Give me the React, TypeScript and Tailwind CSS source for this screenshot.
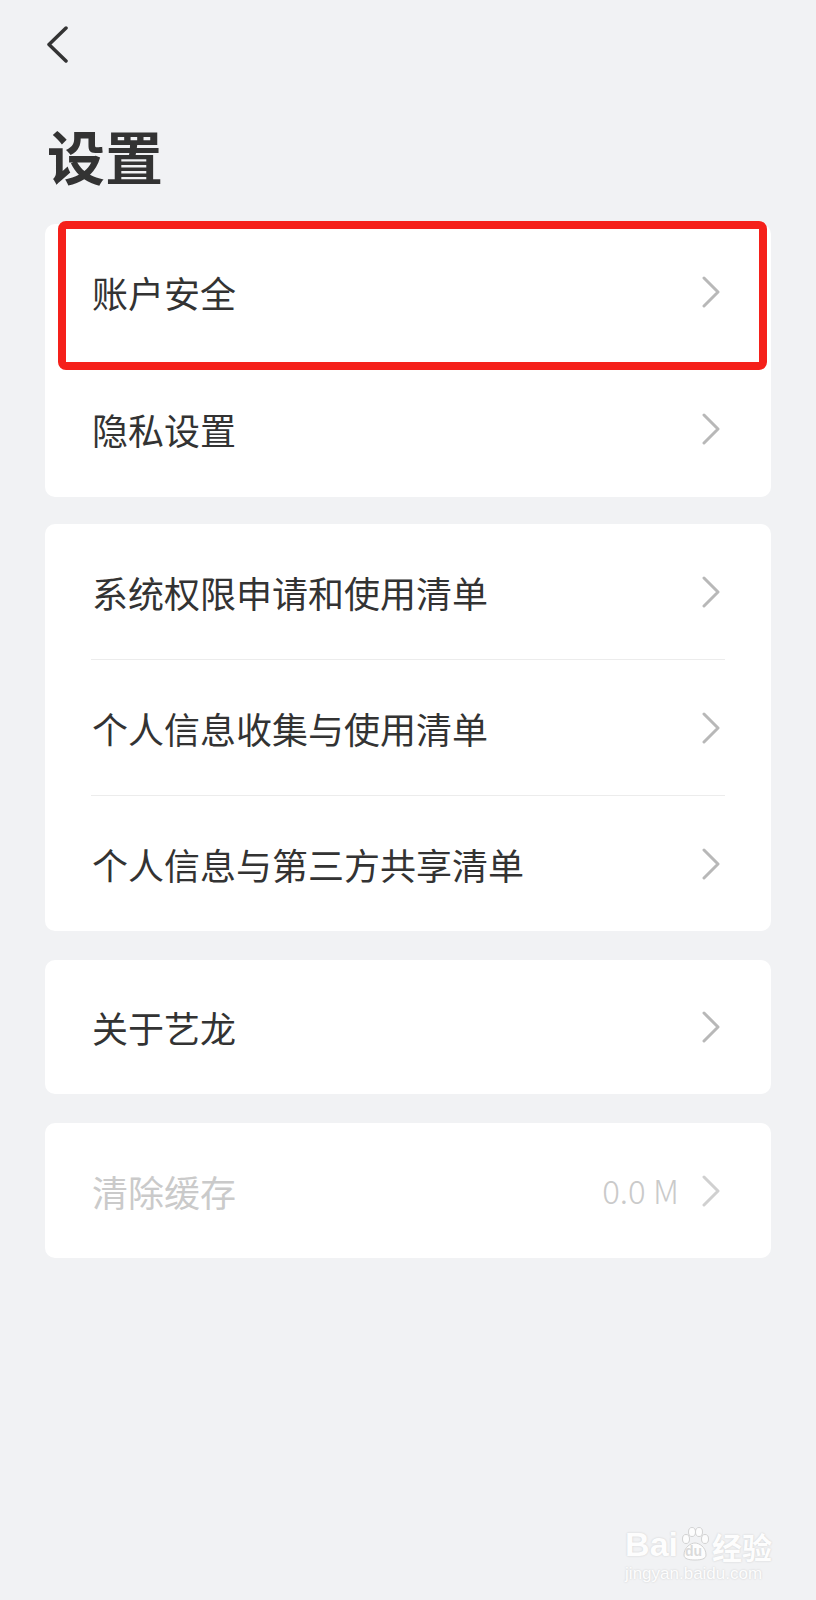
import React from "react";

const font = "font-['Noto_Sans_CJK_SC','Noto_Sans',sans-serif]";

const Chevron = ({ light }: { light?: boolean }) => (
  <svg width="20" height="32" viewBox="0 0 20 32" fill="none" className="shrink-0">
    <path
      d="M3 2 L17 16 L3 30"
      stroke={light ? "#d0d0d0" : "#b8b8b8"}
      strokeWidth="3"
      strokeLinecap="round"
      strokeLinejoin="round"
    />
  </svg>
);

type RowProps = {
  label: string;
  height: string;
  divider?: boolean;
  disabled?: boolean;
  value?: string;
};

const Row = ({ label, height, divider, disabled, value }: RowProps) => (
  <div className={`${height} flex flex-col`}>
    <div className="flex-1 flex items-center pl-[47px] pr-[50px]">
      <span
        className={`flex-1 text-[36px] leading-none ${
          disabled ? "text-[#cacaca]" : "text-[#333333]"
        }`}
      >
        {label}
      </span>
      {value && (
        <span className="text-[33px] leading-none text-[#cacaca] mr-[22px] font-light">
          {value}
        </span>
      )}
      <Chevron light={disabled} />
    </div>
    {divider && <div className="mx-[46px] h-px bg-[#ececec]" />}
  </div>
);

const Watermark = () => (
  <div className="absolute right-[44px] bottom-[18px] flex flex-col items-start opacity-90">
    <div className="flex items-end">
      <span className="text-[34px] font-bold leading-none text-white [text-shadow:0_0_2px_#c8c8c8] font-['Liberation_Sans',sans-serif]">
        Bai
      </span>
      <div className="relative w-[32px] h-[34px] mx-[1px]">
        <svg width="32" height="34" viewBox="0 0 32 34" className="absolute inset-0">
          <g fill="#fff" stroke="#cfcfcf" strokeWidth="1">
            <ellipse cx="7" cy="12" rx="3.5" ry="4.5" />
            <ellipse cx="13" cy="5" rx="3.5" ry="4.5" />
            <ellipse cx="20" cy="5" rx="3.5" ry="4.5" />
            <ellipse cx="26" cy="12" rx="3.5" ry="4.5" />
            <path d="M5 28 C5 20 12 16 16 16 C20 16 27 20 27 28 C27 32 22 33 16 33 C10 33 5 32 5 28 Z" />
          </g>
        </svg>
        <span className="absolute left-[6px] bottom-[3px] text-[14px] font-bold leading-none text-[#d8d8d8] font-['Liberation_Sans',sans-serif]">
          du
        </span>
      </div>
      <span className="text-[30px] font-bold leading-none text-white [text-shadow:0_0_2px_#c8c8c8] font-['Noto_Sans_CJK_SC',sans-serif]">
        经验
      </span>
    </div>
    <span className="mt-[4px] text-[17px] leading-none text-white [text-shadow:0_0_2px_#c8c8c8] font-['Liberation_Sans',sans-serif]">
      jingyan.baidu.com
    </span>
  </div>
);

export default function App() {
  return (
    <div className={`relative min-h-[1600px] w-full bg-[#f1f2f4] px-[45px] ${font}`}>
      <div className="h-[62px] pt-[26px] pl-[1px]">
        <svg width="24" height="37" viewBox="0 0 24 37" fill="none">
          <path
            d="M20 2 L3 18.5 L20 35"
            stroke="#333333"
            strokeWidth="3.5"
            strokeLinecap="round"
            strokeLinejoin="round"
          />
        </svg>
      </div>

      <h1 className="mt-[64px] pl-[2px] text-[58px] leading-[58px] font-bold text-[#333333]">
        设置
      </h1>

      <div className="mt-[40px] flex flex-col">
        <div className="relative rounded-[10px] bg-white">
          <Row label="账户安全" height="h-[136px]" />
          <Row label="隐私设置" height="h-[137px]" />
          <div className="absolute left-[13px] top-[-3px] w-[709px] h-[149px] rounded-[8px] border-[8px] border-[#f5201a]" />
        </div>

        <div className="mt-[27px] rounded-[10px] bg-white">
          <Row label="系统权限申请和使用清单" height="h-[136px]" divider />
          <Row label="个人信息收集与使用清单" height="h-[136px]" divider />
          <Row label="个人信息与第三方共享清单" height="h-[135px]" />
        </div>

        <div className="mt-[29px] rounded-[10px] bg-white">
          <Row label="关于艺龙" height="h-[134px]" />
        </div>

        <div className="mt-[29px] rounded-[10px] bg-white">
          <Row label="清除缓存" height="h-[135px]" disabled value="0.0 M" />
        </div>
      </div>

      <Watermark />
    </div>
  );
}
